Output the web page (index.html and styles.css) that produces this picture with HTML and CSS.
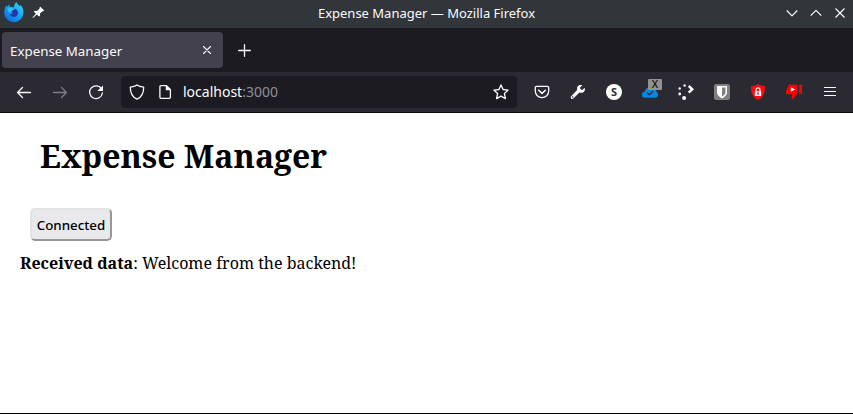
FILE: index.html
```html
<!DOCTYPE html>
<html lang="en">
<head>
<meta charset="utf-8">
<title>Expense Manager</title>
<link rel="stylesheet" href="styles.css">
</head>
<body>
<div class="window">
  <header class="titlebar">
    <div class="title-left">
      <svg class="firefox" width="20" height="21" viewBox="0 0 20 21">
        <defs>
          <linearGradient id="fox" x1="1" y1="0" x2=".2" y2="1"><stop offset="0" stop-color="#3fe0f8"/><stop offset=".5" stop-color="#18a5f5"/><stop offset="1" stop-color="#086bdf"/></linearGradient>
        </defs>
        <path fill="url(#fox)" d="M12.6 0c.2 2 2.200 3 3.200 4.300l.6-1.200c2.300 2 3.300 4.900 3 8.100-.5 5.200-4.600 8.800-9.700 8.800-5.400 0-9.500-4-9.500-9.400 0-3.400 1-5.600 2.300-7.300l.7 1.500L5 2.600l.8 2.300c1.400-.2 2.900 0 4 .6.400-2.200 1-4.200 2.800-5.500z"/>
        <path fill="#2a35a5" d="M8 7c3.400-1.200 6 .8 6 3.900 0 2.600-1.900 4-4.100 4-2.200 0-3.900-1.300-4.100-3.200 1.500.8 2.600.3 3.400-.8-1.300-.5-2.300-.6-2.500-1.600C6.700 7.900 7.200 7 8 7z"/>
        <path fill="#28c0f5" d="M3.500 6.200c2-1 3.500-.7 4.800.3l2.400.4c-.4 1.100-1.700 1.200-2.300 1.600-.2 1.500-2 1.300-2.400 2.500-1.500-1-2.500-2.500-2.500-4.800z"/>
      </svg>
      <svg class="pin" width="13" height="13" viewBox="0 0 13 13"><path fill="#fff" d="M8.300.8 12.200 4.500 11.300 5.300 10.500 5.200 8 7.600 8.100 9.600 7.100 10.600 4.900 8.600 1 12 .5 11.500 3.900 7.700 1.900 5.700 2.900 4.800 5 4.900 7.600 2.500 7.500 1.600z"/></svg>
    </div>
    <div class="title-text"><span>Expense Manager — Mozilla Firefox</span></div>
    <div class="title-right">
      <svg width="12" height="12" viewBox="0 0 12 12"><path d="M.7 3.500 6 8.800 11.300 3.500"/></svg>
      <svg width="12" height="12" viewBox="0 0 12 12"><path d="M.7 8.700 6 3.400 11.300 8.700"/></svg>
      <svg width="12" height="12" viewBox="0 0 12 12"><path d="M1.500 1.500 10.500 10.500M10.500 1.500 1.500 10.500"/></svg>
    </div>
  </header>
  <div class="tabs">
    <div class="tab"><span>Expense Manager</span>
      <svg width="10" height="10" viewBox="0 0 10 10"><path d="M1.500 1.500 8.500 8.500M8.500 1.500 1.500 8.500"/></svg>
    </div>
    <svg class="plus" width="13" height="13" viewBox="0 0 13 13"><path d="M6.500 .7V12.300M.7 6.500H12.300"/></svg>
  </div>
  <nav class="toolbar">
    <svg class="back" width="16" height="16" viewBox="0 0 16 16"><path d="M14.500 8.500H1.600M6.500 3.500 1.500 8.500 6.500 13.500"/></svg>
    <svg class="forward" width="16" height="16" viewBox="0 0 16 16"><path d="M1.500 8.500H14.400M9.500 3.500 14.500 8.500 9.500 13.500"/></svg>
    <svg class="reload" width="16" height="16" viewBox="0 0 16 16"><path d="M13.600 5A6.400 6.400 0 1 0 14.400 9"/><path class="solid" d="M15 1.500V7H9.300z"/></svg>
    <div class="urlbar">
      <svg width="16" height="16" viewBox="0 0 16 16"><path d="M8 .9C6.500 2 4 2.800 1.300 3.100 1.200 8.500 3 13.100 8 15.200 13 13.100 14.800 8.500 14.700 3.100 12 2.800 9.500 2 8 .9z"/></svg>
      <svg width="16" height="16" viewBox="0 0 16 16"><path d="M4 1.700H9.500L13.400 5.500V13.200Q13.400 14.300 12.300 14.300H4Q2.900 14.300 2.900 13.200V2.800Q2.900 1.700 4 1.700z"/><path class="solid" d="M8.800 1.200 13.800 6.200H8.800z"/></svg>
      <div class="url">localhost<span>:3000</span></div>
      <svg class="star" width="16" height="16" viewBox="0 0 16 16"><path d="M8 .9 10.100 5.500 15.100 6.100 11.400 9.500 12.400 14.600 8 12.100 3.600 14.600 4.600 9.500 .9 6.100 5.900 5.500z"/></svg>
    </div>
    <div class="extensions">
      <svg width="16" height="16" viewBox="0 0 16 16"><path d="M2.600 2.400H13.400Q14.700 2.400 14.700 3.700V7A6.700 6.700 0 0 1 1.300 7V3.700Q1.300 2.400 2.600 2.400z"/><path d="M4.600 6.200 8 9.400 11.400 6.200" stroke-width="1.500"/></svg>
      <svg width="16" height="16" viewBox="0 0 16 16"><path class="solid" d="M14.600 3.700 12 6.300 9.700 4 12.300 1.300C9.300.2 6.400 2.200 7.100 5.900L.9 12.600Q.3 13.500 1.200 14.500 2.300 15.600 3.300 14.600L9.500 8.600C13.500 9.600 15.800 6.700 14.600 3.700z"/><circle cx="2.700" cy="13" r=".8" fill="#2b2a33" stroke="none"/></svg>
      <div class="session">S</div>
      <div class="cloud">
        <svg width="20" height="20" viewBox="0 0 20 20"><g fill="#0486e5" stroke="none"><rect x="2" y="9.700" width="16" height="6" rx="3"/><circle cx="9" cy="10" r="4.400"/><circle cx="13.500" cy="10.500" r="3.200"/></g><path d="M7.400 11 9.300 12.900 12.700 9.500" stroke="#2b2a33" stroke-width="1.300"/></svg>
        <span class="badge">X</span>
      </div>
      <svg width="18" height="18" viewBox="0 0 18 18"><g fill="#fbfbfe" stroke="none"><circle cx="7.600" cy="2.500" r="1.200"/><circle cx="2.700" cy="5.500" r="1.200"/><circle cx="2.700" cy="11" r="1.400"/><circle cx="7.100" cy="14.900" r="2"/></g><path d="M11.700 2.900 15.200 6.300 11.700 9.700" stroke-width="2.500" stroke-linecap="butt" stroke-linejoin="miter"/></svg>
      <svg width="16" height="16" viewBox="0 0 16 16"><rect width="16" height="16" rx="2.200" fill="#808080" stroke="none"/><path d="M3 2H13V8C13 11.300 10 13.300 8 14.400 6 13.300 3 11.300 3 8z" fill="#fff" stroke="none"/><path d="M8 3.500H11.500V8C11.500 10.200 9.800 11.600 8 12.600z" fill="#808080" stroke="none"/></svg>
      <svg width="16" height="16" viewBox="0 0 16 16"><path d="M8 0C10 1.400 12.500 2 15 2.100 15.200 8.600 13.500 13.500 8 16 2.500 13.500.8 8.600 1 2.100 3.500 2 6 1.400 8 0z" fill="#f80c12" stroke="none"/><rect x="4.800" y="7.200" width="6.400" height="4.800" rx=".5" fill="#fff" stroke="none"/><path d="M6 7.500V5.900A2 2 0 0 1 10 5.900V7.500" stroke="#fff" stroke-width="1.200"/><path d="M8 8.600V10.500" stroke="#f80c12"/></svg>
      <svg width="18" height="16" viewBox="0 0 18 16"><g fill="#f00" stroke="none"><path d="M4 .8H12.400V10L7.800 15.300 6.500 14.200 7.200 10.300H2.300Q1 10.200 1 8.900V7.200z"/><path d="M14.100.8H17V9.700H14.100z"/></g><path d="M5.900 3.200 10.200 5.500 5.900 7.800z" fill="#fff" stroke="none"/></svg>
      <svg width="16" height="16" viewBox="0 0 16 16"><path d="M2.500 3.500H13.500M2.500 7.500H13.500M2.500 11.500H13.500" stroke-width="1.200"/></svg>
    </div>
  </nav>
  <main class="page">
    <h1>Expense Manager</h1>
    <button class="status">Connected</button>
    <p><b>Received data</b>: Welcome from the backend!</p>
  </main>
</div>
</body>
</html>
```
FILE: styles.css
```css
* { box-sizing: border-box; }
body { margin: 0; font-family: "Noto Sans", sans-serif; color: #fbfbfe; }
svg { display: block; flex: none; fill: none; stroke: #fbfbfe; stroke-width: 1.3; stroke-linecap: round; stroke-linejoin: round; }
.solid { fill: #fbfbfe; stroke: none; }
.window { height: 414px; display: flex; flex-direction: column; border-bottom: 1px solid #000; background: #fff; overflow: hidden; }
.titlebar { height: 28px; flex: none; display: grid; grid-template-columns: 100px 1fr 100px; align-items: center; background: #31363b; }
.title-left { display: flex; align-items: center; gap: 8px; padding-left: 4px; }
.title-left svg { stroke: none; }
.firefox { margin-top: -3px; }
.pin { margin-top: -3px; }
.title-text { text-align: center; font-size: 13px; line-height: 18px; white-space: nowrap; padding: 0 0 2px 0; }
.title-right { display: flex; justify-content: flex-end; gap: 12px; padding-right: 7px; margin-top: -2px; }
.title-right svg { stroke-width: 1.2; stroke-linecap: butt; }
.tabs { height: 44px; flex: none; display: flex; align-items: center; background: #1c1b22; padding-left: 2px; }
.tab { width: 221px; height: 36px; display: flex; align-items: center; justify-content: space-between; padding: 2px 11px 0 8px; border-radius: 4px; background: #42414d; font-size: 13.33px; }
.tab svg { margin-top: -2px; stroke-width: 1.1; }
.plus { margin: 1px 0 0 15px; stroke-width: 1.3; }
.toolbar { height: 41px; flex: none; display: flex; align-items: center; padding-left: 16px; background: #2b2a33; border-bottom: 1px solid #0c0c0d; }
.forward { margin-left: 20px; opacity: .4; }
.reload { margin-left: 20px; }
.urlbar { width: 396px; height: 32px; flex: none; margin-left: 17px; padding: 0 8px; display: flex; align-items: center; gap: 12px; border-radius: 4px; background: #1c1b22; }
.url { flex: 1; margin-left: -2px; font-size: 14px; line-height: 20px; }
.url span { color: #8f8e96; }
.extensions { display: grid; grid-template-columns: repeat(9, 36px); justify-items: center; align-items: center; margin-left: 7px; }
.session { width: 16px; height: 16px; border-radius: 50%; background: #fff; color: #2b2a33; font-size: 11px; line-height: 16px; font-weight: 700; text-align: center; }
.cloud { position: relative; width: 20px; height: 20px; }
.badge { position: absolute; left: 8px; top: -3px; width: 14px; height: 11px; border-radius: 1px; background: #919191; color: #111; font-size: 10.5px; font-weight: 500; line-height: 11px; text-align: center; }
.page { flex: 1; padding: 0 20px; color: #000; font-family: "Noto Serif", "Droid Serif", "DejaVu Serif", serif; font-size: 16px; }
h1 { margin: 21px 0 0 20px; font-size: 32px; line-height: 44px; font-weight: 700; }
.status { display: block; margin: 30px 0 0 10px; width: 82px; height: 33px; padding: 1px 0 0; border: 2px solid; border-color: #e3e3e3 #979797 #979797 #e3e3e3; border-radius: 5px; background: #e9e9ed; color: #000; font: 500 13.33px "Noto Sans", sans-serif; }
p { margin: 11px 0 0; line-height: 22px; white-space: nowrap; }
```
